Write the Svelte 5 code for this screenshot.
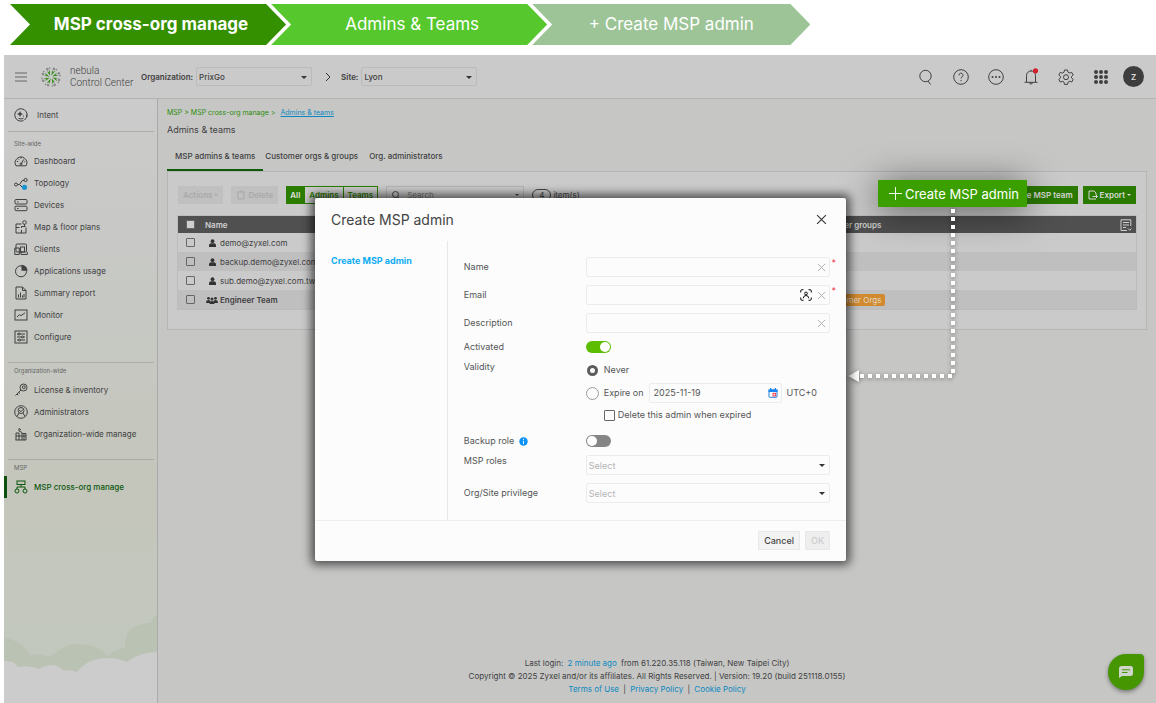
<script lang="ts">
    const steps = ["MSP cross-org manage", "Admins & Teams", "+ Create MSP admin"];

    const siteLinks = [
        { icon: "dashboard", label: "Dashboard" },
        { icon: "topology", label: "Topology" },
        { icon: "devices", label: "Devices" },
        { icon: "map", label: "Map & floor plans" },
        { icon: "clients", label: "Clients" },
        { icon: "usage", label: "Applications usage" },
        { icon: "report", label: "Summary report" },
        { icon: "monitor", label: "Monitor" },
        { icon: "configure", label: "Configure" },
    ];
    const orgLinks = [
        { icon: "key", label: "License & inventory" },
        { icon: "admins", label: "Administrators" },
        { icon: "building", label: "Organization-wide manage" },
    ];
    const mspLinks = [{ icon: "tree", label: "MSP cross-org manage", active: true }];

    const sections = [
        { title: "Site-wide", links: siteLinks },
        { title: "Organization-wide", links: orgLinks },
        { title: "MSP", links: mspLinks },
    ];

    const tabs = ["MSP admins & teams", "Customer orgs & groups", "Org. administrators"];

    const rows = [
        { name: "demo@zyxel.com" },
        { name: "backup.demo@zyxel.com" },
        { name: "sub.demo@zyxel.com.tw" },
        { name: "Engineer Team", team: true, tag: "Customer Orgs" },
    ];

    let activeTab = $state(0);
    let filter = $state("All");
    let activated = $state(true);
    let backup = $state(false);
    let validity = $state("never");
    let expireDate = $state("2025-11-19");
    let name = $state("");
    let email = $state("");
    let description = $state("");
</script>

{#snippet icon(kind: string)}
    <svg class="icon" viewBox="0 0 14 14" aria-hidden="true">
        {#if kind === "intent"}
            <path d="M9.5 12.6A6.2 6.2 0 1 1 12.7 9.300M12.900 6.500A6.200 6.200 0 0 1 10.500 12" />
            <path class="solid" d="M6 3l.9 2.100 2.100.9-2.100.9-.9 2.100-.9-2.100-2.100-.9 2.100-.9z" />
            <path d="M4.500 10.300q2.500 1.400 5 0M9.500 7.500v1" />
        {:else if kind === "dashboard"}
            <path d="M2 11.800A5.800 5.800 0 1 1 12 11.800zM7.300 9.800L9.600 5.500M7 3v1.500M2.800 7.500h1.500M4 4.600l1 1M11.300 7.800h-1" />
            <circle cx="7" cy="10" r="1" />
        {:else if kind === "topology"}
            <circle cx="2" cy="8.500" r="1.500" />
            <circle cx="11.600" cy="4" r="1.600" />
            <path d="M3.500 8.500h2L8 4.800l2-.6M5.500 8.500L8 11" />
            <circle class="dot" cx="10.500" cy="11.300" r="2.600" />
        {:else if kind === "devices"}
            <rect x="1" y="1.500" width="12" height="4.500" rx="1" />
            <rect x="1" y="8.200" width="12" height="4.500" rx="1" />
            <path d="M3 3.800h1.500M3 10.500h1.500" />
        {:else if kind === "map"}
            <path d="M7.500 4H2v9h10V7.500M2 7.500h3.500M7.500 13v-3M7.500 8V6.500h4" />
            <circle cx="10.500" cy="2.500" r="1.800" />
            <path d="M10.500 4.300v2" />
        {:else if kind === "clients"}
            <rect x="2" y="2" width="10.500" height="8" rx="1" />
            <path d="M.8 6v6.500h4.500V6zM7 10v2.500h6.300V10" />
            <rect x="6.500" y="5" width="4" height="5" />
        {:else if kind === "usage"}
            <circle cx="7" cy="7.300" r="5.500" />
            <path class="solid" d="M7.500.8a6 6 0 0 1 6 6h-6z" />
        {:else if kind === "report"}
            <path d="M2 1h6.500L12 4.500V13H2zM8.500 1v3.500H12" />
            <path d="M4.500 11.500v-3M6.500 11.500v-5M8.500 11.500v-2M10 11.500V8" />
        {:else if kind === "monitor"}
            <rect x="1" y="2" width="12" height="10" />
            <path d="M3 9l2.500-2.300 1.500 1L11 4.800" />
        {:else if kind === "configure"}
            <rect x="1" y="1" width="12" height="12" />
            <path d="M3 4h8M3 7h8M3 10h8" />
            <circle class="hole" cx="5" cy="4" r="1" />
            <circle class="hole" cx="8.500" cy="7" r="1" />
            <circle class="hole" cx="5.500" cy="10" r="1" />
        {:else if kind === "key"}
            <circle cx="9.500" cy="4.500" r="3.500" />
            <circle cx="9.800" cy="4.200" r="1.400" />
            <path d="M7 7l-5.500 5.500M3 11l1.300 1.300M4.700 9.300L6 10.600" />
        {:else if kind === "admins"}
            <circle cx="7" cy="7" r="6.300" />
            <circle cx="7" cy="5.500" r="3" />
            <path d="M5.300 5l1.500 1.800L9 4.500M5 8l-2 3.500M9 8l2 3.500" />
        {:else if kind === "building"}
            <path d="M2 13V6h3v7M5 4l3 1.500V13M8 6.500h4V13H1.500M5 4V1.500L7 3M2 9h10M10 6.500V13" />
        {:else if kind === "tree"}
            <rect x="3" y="1" width="8" height="3.500" />
            <path d="M7 4.500v2.500M3 9V7h8v2" />
            <circle cx="3" cy="11" r="2" />
            <circle cx="11" cy="11" r="2" />
        {/if}
    </svg>
{/snippet}

{#snippet cross()}
    <svg class="cross" viewBox="0 0 10 10" aria-hidden="true"><path d="M1 1l8 8M9 1L1 9" /></svg>
{/snippet}

<div class="page">
    <ol class="steps">
        {#each steps as step, i}
            <li class="step step-{i}">{step}</li>
        {/each}
    </ol>

    <div class="app">
        <header>
            <button class="plain burger" aria-label="Menu">
                <svg viewBox="0 0 12 10"><path d="M0 1h12M0 5h12M0 9h12" /></svg>
            </button>
            <svg class="logo" viewBox="-10 -10 20 20" aria-hidden="true">
                {#each [0, 45, 90, 135, 180, 225, 270, 315] as angle}
                    <g transform="rotate({angle + 22})">
                        <path class="leaf" d="M-.3 -1.500L1.800 -7.300L-.2 -5.500L-1.600 -7z" />
                        <circle class="tip" cx="-.3" cy="-8.600" r="1.300" />
                        <circle class="tip" cx="2.300" cy="-8.800" r=".8" />
                    </g>
                {/each}
            </svg>
            <div class="brand">nebula<br />Control Center</div>

            <label class="picker">
                <span>Organization:</span>
                <span class="select">
                    <select><option>PrixGo</option></select>
                </span>
            </label>
            <svg class="chevron" viewBox="0 0 6 10" aria-hidden="true"><path d="M1 1l4 4-4 4" /></svg>
            <label class="picker">
                <span>Site:</span>
                <span class="select">
                    <select><option>Lyon</option></select>
                </span>
            </label>

            <nav class="tools" aria-label="Tools">
                <button class="plain" aria-label="Search">
                    <svg viewBox="0 0 16 16"><circle cx="7.500" cy="7" r="5.700" /><path d="M10 12l2.500 3.500" /></svg>
                </button>
                <button class="plain" aria-label="Help">
                    <svg viewBox="0 0 16 16">
                        <circle cx="8" cy="8" r="7.300" />
                        <path d="M6 6.300a2 2 0 1 1 3 1.600q-1 .6-1 1.600M8 11v1.200" />
                    </svg>
                </button>
                <button class="plain" aria-label="More">
                    <svg viewBox="0 0 16 16">
                        <circle cx="8" cy="8" r="7.300" />
                        <path class="dots" d="M4.500 8h0M8 8h0M11.500 8h0" />
                    </svg>
                </button>
                <button class="plain" aria-label="Notifications">
                    <svg viewBox="0 0 16 16">
                        <path d="M1.500 13.300h13M3.500 13V6.500a4.500 4.500 0 0 1 9 0V13M6.500 13.500a1.500 1.500 0 0 0 3 0M8 2V.8" />
                        <circle class="alert" cx="12.500" cy="1.800" r="2.600" />
                    </svg>
                </button>
                <button class="plain" aria-label="Settings">
                    <svg viewBox="0 0 16 16">
                        <path d="M6.500 1h3l.5 2.200 1.500.9 2.200-.7 1.500 2.600-1.700 1.500v1.400l1.700 1.500-1.500 2.600-2.200-.7-1.500.9-.5 2.200h-3L6 13.200l-1.500-.9-2.200.7L.8 10.400l1.700-1.500V7.500L.8 6l1.500-2.600 2.200.7L6 3.200z" />
                        <circle cx="8" cy="8.200" r="2.500" />
                    </svg>
                </button>
                <button class="plain" aria-label="Apps">
                    <svg viewBox="0 0 16 16">
                        <path class="grid-dots" d="M3 3h0M8 3h0M13 3h0M3 8h0M8 8h0M13 8h0M3 13h0M8 13h0M13 13h0" />
                    </svg>
                </button>
                <button class="avatar">Z</button>
            </nav>
        </header>

        <div class="columns">
            <aside>
                <a class="nav-link intent" href="#intent">{@render icon("intent")}Intent</a>
                {#each sections as section}
                    <section>
                        <h2>{section.title}</h2>
                        {#each section.links as link}
                            <a class="nav-link" class:active={link.active} href="#{link.icon}">
                                {@render icon(link.icon)}{link.label}
                            </a>
                        {/each}
                    </section>
                {/each}
                <svg class="clouds" viewBox="0 0 153 100" preserveAspectRatio="none" aria-hidden="true">
                    <path class="back" d="M0 35Q17 37 26 52Q38 50 46 54Q60 41 75 41Q93 41 104 53Q112 45 121 45Q119 21 147 20Q149 14 153 12V100H0z" />
                    <path class="front" d="M0 58Q10 57 14 64Q26 62 35 66Q50 57 60 68Q67 66 73 69Q84 55 103 55Q114 55 123 59Q136 49 153 49V100H0z" />
                </svg>
            </aside>

            <main>
                <p class="crumbs">MSP &gt; MSP cross-org manage &gt; <a href="#teams">Admins &amp; teams</a></p>
                <h1>Admins &amp; teams</h1>
                <div class="tabs" role="tablist">
                    {#each tabs as tab, i}
                        <button
                            role="tab"
                            class:current={activeTab === i}
                            aria-selected={activeTab === i}
                            onclick={() => (activeTab = i)}>{tab}</button
                        >
                    {/each}
                </div>

                <div class="panel">
                    <div class="toolbar">
                        <button class="off" disabled>Actions <i class="caret"></i></button>
                        <button class="off" disabled>
                            <svg viewBox="0 0 10 10"><path d="M1 2h8M2 2v7h6V2M4 2V1h2v1" /></svg>Delete
                        </button>
                        <div class="filters">
                            {#each ["All", "Admins", "Teams"] as option}
                                <button class:picked={filter === option} onclick={() => (filter = option)}>
                                    {option}
                                </button>
                            {/each}
                        </div>
                        <div class="search">
                            <svg viewBox="0 0 10 10"><circle cx="4.500" cy="4.500" r="3" /><path d="M7 7l2 2" /></svg>
                            <input type="text" placeholder="Search" aria-label="Search" />
                            <i class="caret"></i>
                        </div>
                        <div class="count"><span>4</span> item(s)</div>
                        <button class="green push">Create MSP team</button>
                        <button class="green">
                            <svg viewBox="0 0 10 10"><path d="M8 5V3L6 1H1v8h7M4.500 6.500h5M8 5l1.500 1.500L8 8" /></svg>Export
                            <i class="caret"></i>
                        </button>
                    </div>

                    <table>
                        <thead>
                            <tr>
                                <th class="tick"><input type="checkbox" aria-label="Select all" /></th>
                                <th class="name">Name</th>
                                <th>Customer groups</th>
                                <th class="cols">
                                    <button class="plain" aria-label="Columns">
                                        <svg viewBox="0 0 12 12">
                                            <path d="M7 11.500H1V.8h9.800V7M3 3.500h6M3 6h6M3 8.500h3M8 9.500l1.700 1.700 1.800-1.700" />
                                        </svg>
                                    </button>
                                </th>
                            </tr>
                        </thead>
                        <tbody>
                            {#each rows as row}
                                <tr>
                                    <td class="tick"><input type="checkbox" aria-label="Select {row.name}" /></td>
                                    <td class="who" class:team={row.team}>
                                        <svg viewBox="0 0 12 8" aria-hidden="true">
                                            {#if row.team}
                                                <circle cx="2.500" cy="2.300" r="1.400" />
                                                <path d="M0 7q0-3 2.500-3t2 3z" />
                                                <circle cx="9.500" cy="2.300" r="1.400" />
                                                <path d="M7.500 7q-.5-3 2-3T12 7z" />
                                                <circle cx="6" cy="3" r="1.500" />
                                                <path d="M3.500 8q0-3 2.500-3t2.500 3z" />
                                            {:else}
                                                <circle cx="6.500" cy="2.200" r="1.900" />
                                                <path d="M3 8V6q.2-1.500 2-1.800h3Q9.800 4.500 10 6v2z" />
                                            {/if}
                                        </svg>{row.name}
                                    </td>
                                    <td>{#if row.tag}<span class="tag">{row.tag}</span>{/if}</td>
                                    <td></td>
                                </tr>
                            {/each}
                        </tbody>
                    </table>
                </div>

                <footer>
                    Last login: <a href="#login">2 minute ago</a> from 61.220.35.118 (Taiwan, New Taipei City)<br />
                    Copyright © 2025 Zyxel and/or its affiliates. All Rights Reserved. | Version: 19.20 (build 251118.0155)<br />
                    <a href="#terms">Terms of Use</a> | <a href="#privacy">Privacy Policy</a> | <a href="#cookies">Cookie Policy</a>
                </footer>
            </main>
        </div>

        <button class="callout">
            <svg viewBox="0 0 14 14" aria-hidden="true"><path d="M7 0v14M0 7h14" /></svg>Create MSP admin
        </button>
        <svg class="arrow" width="112" height="178" viewBox="0 0 112 178" aria-hidden="true">
            <path class="line" d="M107 1V168H14" />
            <path class="head" d="M2 168L13 162V174z" />
        </svg>

        <div class="dialog" role="dialog" aria-labelledby="dialog-title">
            <div class="dialog-head">
                <h2 id="dialog-title">Create MSP admin</h2>
                <button class="plain close" aria-label="Close">{@render cross()}</button>
            </div>
            <div class="dialog-body">
                <div class="side"><a href="#create">Create MSP admin</a></div>
                <form id="admin-form">
                    <label for="name">Name</label>
                    <div class="field required">
                        <input id="name" type="text" bind:value={name} />
                        <button type="button" class="plain" aria-label="Clear name" onclick={() => (name = "")}>{@render cross()}</button>
                    </div>

                    <label for="email">Email</label>
                    <div class="field required">
                        <input id="email" type="text" bind:value={email} />
                        <button type="button" class="plain" aria-label="Pick a user">
                            <svg class="scan" viewBox="0 0 12 12">
                                <path d="M.7 3.500V2A1.300 1.300 0 0 1 2 .7h1.500M8.500.7H10A1.300 1.300 0 0 1 11.300 2v1.500M11.300 8.500V10a1.300 1.300 0 0 1-1.300 1.300H8.500M3.500 11.300H2A1.300 1.300 0 0 1 .7 10V8.500" />
                                <circle cx="6" cy="4.500" r="1.400" />
                                <path d="M3.200 9.300Q3.500 6.500 6 6.500t2.800 2.800" />
                            </svg>
                        </button>
                        <button type="button" class="plain" aria-label="Clear email" onclick={() => (email = "")}>{@render cross()}</button>
                    </div>

                    <label for="description">Description</label>
                    <div class="field">
                        <input id="description" type="text" bind:value={description} />
                        <button type="button" class="plain" aria-label="Clear description" onclick={() => (description = "")}>{@render cross()}</button>
                    </div>

                    <label class="short" for="activated">Activated</label>
                    <input id="activated" class="toggle" type="checkbox" bind:checked={activated} />

                    <span class="short">Validity</span>
                    <div class="validity">
                        <label class="never"><input type="radio" value="never" bind:group={validity} />Never</label>
                        <div class="expire">
                            <label><input type="radio" value="expire" bind:group={validity} />Expire on</label>
                            <div class="field date">
                                <input type="text" aria-label="Expiry date" bind:value={expireDate} />
                                <svg class="calendar" viewBox="0 0 10 10" aria-hidden="true">
                                    <rect class="sheet" x="1" y="2" width="8" height="7.300" rx=".5" />
                                    <path class="top" d="M.5 1.500h9v2.500h-9zM2 0h1.300v2H2zM6.700 0H8v2H6.700z" />
                                    <rect class="day" x="5" y="5.300" width="2.600" height="2.600" />
                                </svg>
                            </div>
                            <span>UTC+0</span>
                        </div>
                        <label class="delete"><input type="checkbox" />Delete this admin when expired</label>
                    </div>

                    <label class="short" for="backup">
                        Backup role
                        <svg class="info" viewBox="0 0 10 10" aria-hidden="true">
                            <circle cx="5" cy="5" r="4.700" />
                            <path d="M5 2v1.300M5 4.200V8" />
                        </svg>
                    </label>
                    <input id="backup" class="toggle" type="checkbox" bind:checked={backup} />

                    <label class="short" for="roles">MSP roles</label>
                    <span class="select">
                        <select id="roles"><option>Select</option></select>
                    </span>

                    <label for="privilege">Org/Site privilege</label>
                    <span class="select">
                        <select id="privilege"><option>Select</option></select>
                    </span>
                </form>
            </div>
            <div class="dialog-foot">
                <button type="button">Cancel</button>
                <button type="submit" form="admin-form" disabled>OK</button>
            </div>
        </div>

        <button class="chat" aria-label="Chat">
            <svg viewBox="0 0 14 12" aria-hidden="true">
                <path class="bubble" d="M2.500 0h9A2.500 2.500 0 0 1 14 2.500v5A2.500 2.500 0 0 1 11.500 10H3L0 12V2.500A2.500 2.500 0 0 1 2.500 0z" />
                <path class="words" d="M3 3.800h8M3 6.500h5.500" />
            </svg>
        </button>
    </div>
</div>

<style>
    :global(body) {
        margin: 0;
        background: #fff;
    }

    .page {
        display: flex;
        flex-direction: column;
        box-sizing: border-box;
        min-height: 100vh;
        padding: 4px 0 0 4px;
        font-family: Inter, "Liberation Sans", sans-serif;
        font-size: 8px;
        line-height: 10px;
        color: #3f403f;
    }

    button,
    input,
    select {
        font: inherit;
        color: inherit;
        margin: 0;
    }

    button {
        cursor: pointer;
    }

    svg {
        fill: none;
        stroke: currentColor;
        stroke-width: 1;
    }

    .plain {
        display: flex;
        padding: 0;
        border: none;
        background: none;
    }

    a {
        color: #0d88c0;
        text-decoration: none;
    }

    h1,
    h2,
    p {
        margin: 0;
        font-weight: 400;
    }

    /* Step banner */
    .steps {
        display: flex;
        box-sizing: border-box;
        width: 70%;
        margin: 0 0 10px;
        padding: 0 0 0 6px;
        list-style: none;
    }

    .step {
        flex: 1;
        box-sizing: border-box;
        height: 41px;
        margin-right: -15px;
        padding-left: 6px;
        line-height: 40px;
        text-align: center;
        font-size: 17px;
        color: #fff;
        clip-path: polygon(0 0, calc(100% - 20px) 0, 100% 50%, calc(100% - 20px) 100%, 0 100%, 20px 50%);
    }

    .step-0 {
        background: #359000;
        font-weight: 700;
    }

    .step-1 {
        background: #56c72d;
    }

    .step-2 {
        flex-grow: 1.03;
        margin-right: 0;
        padding-left: 0;
        background: #9cc497;
    }

    .app {
        position: relative;
        flex: 1;
        display: flex;
        flex-direction: column;
        background: #c6c7c5;
    }

    /* Header */
    header {
        display: flex;
        align-items: center;
        height: 43px;
        padding: 0 12px 0 11px;
        background: #cacaca;
        border-bottom: 1px solid #b2b3b2;
    }

    .burger svg {
        width: 12px;
        height: 10px;
        stroke: #666;
    }

    .logo {
        width: 20px;
        height: 20px;
        margin: 0 9px 0 14px;
    }

    .leaf {
        fill: #3f8d26;
        stroke: none;
    }

    .tip {
        fill: #858685;
        stroke: none;
    }

    .brand {
        width: 71px;
        font-family: Roboto, "Liberation Sans", sans-serif;
        font-weight: 300;
        font-size: 10px;
        line-height: 12px;
    }

    .picker {
        display: flex;
        align-items: center;
        gap: 3px;
        font-weight: 600;
    }

    .select {
        position: relative;
        display: block;
        font-weight: 400;
    }

    .select::after {
        content: "";
        position: absolute;
        right: 5px;
        top: 50%;
        margin-top: -1px;
        border: 3px solid transparent;
        border-top-color: #333;
        border-bottom: none;
        pointer-events: none;
    }

    select {
        appearance: none;
        width: 100%;
        height: 19px;
        padding: 0 2px;
        border: 1px solid #bbb;
        border-radius: 2px;
        background: transparent;
    }

    .picker select {
        width: 116px;
        font-weight: 500;
    }

    .chevron {
        width: 6px;
        height: 10px;
        margin: 0 10px 0 13px;
        stroke: #333;
    }

    .tools {
        display: flex;
        align-items: center;
        gap: 19px;
        margin-left: auto;
    }

    .tools svg {
        width: 16px;
        height: 16px;
        overflow: visible;
    }

    .dots {
        stroke-linecap: round;
        stroke-width: 2;
    }

    .grid-dots {
        stroke-width: 4;
        stroke-linecap: round;
    }

    .alert {
        fill: #d3202c;
        stroke: none;
    }

    .avatar {
        width: 21px;
        height: 21px;
        margin-left: -5px;
        padding: 0;
        border: none;
        border-radius: 50%;
        background: #3d3d3d;
        color: #ddd;
        font-weight: 600;
    }

    /* Sidebar */
    .columns {
        flex: 1;
        display: flex;
    }

    aside {
        display: flex;
        flex-direction: column;
        width: 153px;
        border-right: 1px solid #a9aaa9;
        background: linear-gradient(#cbcbcb, #c6c8c3 220px, #c4c6bb 400px, #c2c8bf);
    }

    section {
        display: flex;
        flex-direction: column;
        margin-bottom: 14px;
    }

    section h2 {
        margin: 0 3px 0 4px;
        padding: 4px 6px;
        border-top: 1px solid #acadab;
        font-size: 6px;
        line-height: 8px;
        color: #646564;
    }

    .intent + section h2 {
        padding-top: 8px;
        padding-bottom: 2px;
    }

    .nav-link {
        display: flex;
        align-items: center;
        gap: 6px;
        height: 22px;
        padding-left: 10px;
        color: inherit;
    }

    .intent {
        gap: 9px;
        margin: 5px 0;
    }

    .active {
        padding-left: 7px;
        border-left: 3px solid #0d4f0d;
        color: #0d560d;
        font-weight: 500;
    }

    .icon {
        width: 14px;
        height: 14px;
    }

    .solid {
        fill: currentColor;
        stroke: none;
    }

    .dot {
        fill: #1c94cf;
        stroke: none;
    }

    .hole {
        fill: #c6c8c3;
    }

    .clouds {
        width: 100%;
        height: 100px;
        margin-top: auto;
        stroke: none;
    }

    .back {
        fill: #bac2b3;
    }

    .front {
        fill: #cccccc;
    }

    /* Content */
    main {
        flex: 1;
        display: flex;
        flex-direction: column;
        padding: 9px 9px 7px 9px;
    }

    .crumbs {
        font-size: 7px;
        color: #2c8c0c;
    }

    .crumbs a {
        margin-left: 3px;
        text-decoration: underline;
    }

    h1 {
        margin-top: 6px;
        font-size: 9px;
        line-height: 12px;
    }

    .tabs {
        display: flex;
        margin-top: 6px;
    }

    .tabs button {
        height: 29px;
        padding: 0 9px 0 2px;
        border: none;
        border-bottom: 2px solid transparent;
        background: none;
        font-weight: 500;
    }

    .tabs .current {
        padding: 0 8px;
        border-color: #0d5a0d;
    }

    .panel {
        padding: 14px 10px 20px 10px;
        border: 1px solid #b4b5b4;
        background: #cacaca;
    }

    .toolbar {
        display: flex;
        gap: 8px;
        margin-bottom: 12px;
    }

    .toolbar button {
        display: flex;
        align-items: center;
        gap: 2px;
        height: 18px;
        padding: 0 5px;
        border: none;
        font-weight: 600;
    }

    .toolbar svg {
        width: 10px;
        height: 10px;
    }

    .toolbar .off {
        background: #c0c0c0;
        color: #a9a9a9;
    }

    .caret {
        border: 2px solid transparent;
        border-top-color: currentColor;
        border-bottom: none;
    }

    .filters {
        display: flex;
    }

    .filters button {
        padding: 0 4px;
        border: 1px solid #2b7d00;
        border-left-width: 0;
        background: none;
        color: #2b7d00;
    }

    .filters .picked {
        background: #2b7d00;
        color: #e0e0e0;
    }

    .search {
        display: flex;
        align-items: center;
        gap: 6px;
        width: 138px;
        box-sizing: border-box;
        height: 18px;
        padding: 0 4px;
        border: 1px solid #b4b4b4;
        color: #444;
    }

    .search svg {
        flex-shrink: 0;
    }

    .search input {
        flex: 1;
        min-width: 0;
        border: none;
        background: none;
        padding: 0;
    }

    .search input::placeholder {
        color: #777;
    }

    .count {
        display: flex;
        align-items: center;
        gap: 2px;
    }

    .count span {
        padding: 0 6px;
        border: 1px solid #444;
        border-radius: 6px;
    }

    .toolbar .green {
        background: #2b7a00;
        color: #d8d8d8;
    }

    .toolbar .push {
        justify-content: flex-end;
        width: 54px;
        margin-left: auto;
        margin-right: -3px;
        overflow: hidden;
        white-space: nowrap;
    }

    table {
        width: 100%;
        border-collapse: collapse;
        table-layout: fixed;
        outline: 1px solid #bcbcbc;
    }

    th,
    td {
        height: 19px;
        padding: 0;
        text-align: left;
        white-space: nowrap;
    }

    th {
        height: 17px;
        background: #505050;
        color: #d0d0d0;
        font-weight: 600;
    }

    tbody tr:nth-child(even) {
        background: #bfbfbf;
    }

    .tick {
        width: 27px;
    }

    .name {
        width: 63.6%;
    }

    .cols {
        width: 16px;
    }

    .cols svg {
        width: 12px;
        height: 12px;
    }

    .tick input,
    .delete input {
        appearance: none;
        display: block;
        box-sizing: border-box;
        width: 9px;
        height: 9px;
        margin-left: 8px;
        border: 1px solid #666;
        border-radius: 1px;
    }

    th input {
        background: #cfcfcf;
    }

    .who svg {
        width: 12px;
        height: 8px;
        margin: 0 2px 0 1px;
        vertical-align: -1px;
        fill: #333;
        stroke: none;
    }

    .team {
        font-weight: 600;
    }

    .tag {
        display: inline-block;
        margin-left: 6px;
        padding: 1px 4px;
        border-radius: 2px;
        background: #d18a2e;
        color: #e4d9c8;
    }

    footer {
        margin-top: auto;
        text-align: center;
        line-height: 13px;
    }

    footer a {
        margin: 0 2px;
    }

    /* Callout and arrow over the page */
    .callout {
        position: absolute;
        top: 125px;
        right: 129px;
        display: flex;
        align-items: center;
        gap: 3px;
        height: 27px;
        padding: 0 8px 0 11px;
        border: none;
        border-radius: 1px;
        background: #3c9f00;
        color: #fff;
        font-size: 13px;
        box-shadow: 0 4px 36px rgba(0, 0, 0, 0.6);
    }

    .callout svg {
        width: 13px;
        height: 13px;
    }

    .arrow {
        position: absolute;
        top: 153px;
        right: 198px;
        filter: drop-shadow(0 1px 2px rgba(0, 0, 0, 0.4));
    }

    .line {
        stroke: #fff;
        stroke-width: 4;
        stroke-dasharray: 4 4;
    }

    .head {
        fill: #fff;
        stroke: none;
    }

    /* Dialog */
    .dialog {
        position: absolute;
        top: 143px;
        left: 27%;
        width: 46.1%;
        min-width: 480px;
        border-radius: 2px;
        background: #fcfcfc;
        color: #555;
        font-size: 9px;
        box-shadow: 0 0 10px 4px rgba(0, 0, 0, 0.6);
    }

    .dialog-head {
        display: flex;
        justify-content: space-between;
        align-items: center;
        height: 43px;
        padding: 0 19px 0 16px;
    }

    .dialog-head h2 {
        font-size: 14px;
        line-height: 16px;
        color: #444;
    }

    .cross {
        width: 9px;
        height: 9px;
        stroke: #aaa;
    }

    .close .cross {
        width: 11px;
        height: 11px;
        stroke: #333;
    }

    .dialog-body {
        display: flex;
        border-bottom: 1px solid #eee;
    }

    .side {
        width: 25%;
        box-sizing: border-box;
        padding: 15px 0 0 16px;
        border-right: 1px solid #e8e8e8;
    }

    .side a {
        color: #10adf2;
        font-weight: 700;
    }

    form {
        flex: 1;
        display: grid;
        grid-template-columns: 122px 1fr;
        gap: 8px 0;
        padding: 16px 16px 17px;
        line-height: 20px;
    }

    form .short {
        line-height: 12px;
    }

    .field {
        position: relative;
        display: flex;
        align-items: center;
        gap: 5px;
        box-sizing: border-box;
        height: 20px;
        padding-right: 3px;
        border: 1px solid #ececec;
        border-radius: 2px;
    }

    .field input {
        flex: 1;
        min-width: 0;
        border: none;
        background: none;
        padding: 0 4px;
        outline: none;
    }

    .required::after {
        content: "*";
        position: absolute;
        top: -5px;
        right: -7px;
        color: #f0394d;
    }

    .scan {
        width: 12px;
        height: 12px;
        stroke: #111;
    }

    .toggle {
        appearance: none;
        width: 25px;
        height: 12px;
        border-radius: 6px;
        background: #858585;
    }

    .toggle::before {
        content: "";
        display: block;
        width: 10px;
        height: 10px;
        margin: 1px;
        border-radius: 50%;
        background: #fff;
    }

    .toggle:checked {
        background: #5dbd00;
    }

    .toggle:checked::before {
        margin-left: 14px;
    }

    .validity {
        display: flex;
        flex-direction: column;
        gap: 4px;
        padding-bottom: 4px;
    }

    .validity label,
    .expire {
        display: flex;
        align-items: center;
        gap: 5px;
    }

    .validity input[type="radio"] {
        appearance: none;
        box-sizing: border-box;
        width: 13px;
        height: 13px;
        border: 1px solid #999;
        border-radius: 50%;
    }

    .validity input[type="radio"]:checked {
        width: 11px;
        height: 11px;
        margin: 0 1px;
        border: 3px solid #5c5c5c;
    }

    .never {
        height: 18px;
    }

    .date {
        width: 133px;
    }

    .calendar {
        width: 10px;
        height: 10px;
        stroke: none;
    }

    .sheet {
        fill: #fff;
        stroke: #2a7fdd;
    }

    .top {
        fill: #1a84f0;
    }

    .day {
        fill: #fff;
        stroke: #f0394d;
    }

    .validity .delete {
        gap: 3px;
        height: 16px;
    }

    .delete input {
        width: 11px;
        height: 11px;
        margin-left: 18px;
    }

    .info {
        width: 9px;
        height: 9px;
        margin-left: 2px;
        vertical-align: -2px;
        fill: #0b93f5;
        stroke: none;
    }

    .info path {
        stroke: #fff;
        stroke-width: 1;
    }

    .dialog select {
        display: block;
        height: 20px;
        border-color: #ececec;
        color: #b5b5b5;
    }

    .dialog-foot {
        display: flex;
        justify-content: flex-end;
        gap: 5px;
        padding: 10px 16px 11px;
    }

    .dialog-foot button {
        height: 19px;
        padding: 0 5px;
        border: 1px solid #e8e8e8;
        border-radius: 1px;
        background: #f3f3f3;
        color: #444;
        font-weight: 500;
    }

    .dialog-foot button:disabled {
        color: #ccc;
        background: #eee;
    }

    .chat {
        position: absolute;
        right: 12px;
        bottom: 13px;
        display: flex;
        align-items: center;
        justify-content: center;
        width: 36px;
        height: 36px;
        padding: 0;
        border: none;
        border-radius: 50% 4px 50% 50%;
        background: #459600;
        box-shadow: 0 2px 4px rgba(0, 0, 0, 0.4);
    }

    .chat svg {
        width: 14px;
        height: 12px;
    }

    .bubble {
        fill: #d0d5cc;
        stroke: none;
    }

    .words {
        stroke: #459600;
    }
</style>
